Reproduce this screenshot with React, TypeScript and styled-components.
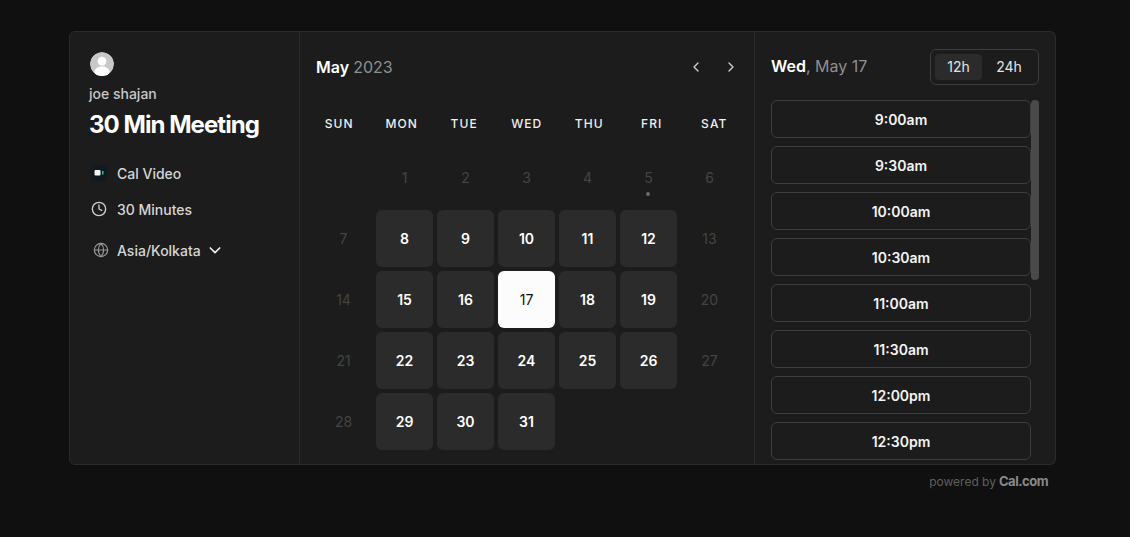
import React from "react";
import styled, { createGlobalStyle } from "styled-components";

const Global = createGlobalStyle`
  html, body { margin: 0; padding: 0; background: #101010; height: 100%; overflow: hidden; }
  body { font-family: Inter, "Noto Sans", sans-serif; color: #fff; }
  * { box-sizing: border-box; }
`;
const Page = styled.div`
  width: 1130px; height: 537px; padding: 31px 0 0 69px; background: #101010;
`;
const Card = styled.main`
  width: 987px; height: 434px; display: flex; background: #1c1c1c;
  border: 1px solid #2b2b2b; border-radius: 6px; overflow: hidden;
`;
const Sidebar = styled.aside`
  width: 230px; flex: none; border-right: 1px solid #2b2b2b; padding: 20px 0 0 19px;
`;
const Avatar = styled.div`
  width: 24px; height: 24px; border-radius: 50%; overflow: hidden; margin-left: 1px;
  svg { display: block; }
`;
const Host = styled.div`
  margin-top: 8px; height: 20px; font-size: 14px; line-height: 20px; font-weight: 500; color: #c8c8c8;
`;
const Title = styled.h1`
  margin: 6px 0 0; font-size: 24px; line-height: 30px; font-weight: 700; letter-spacing: -0.95px; color: #fff;
`;
const Meta = styled.div<{ $top: number }>`
  display: flex; align-items: center; height: 20px; margin-top: ${p => p.$top}px;
  font-size: 14px; font-weight: 500; color: #d6d6d6;
`;
const MetaIcon = styled.span`
  width: 28px; flex: none; display: flex; align-items: center; padding-left: 2px;
`;
const Center = styled.section`
  width: 455px; flex: none; border-right: 1px solid #2b2b2b; padding: 0 0 0 15px;
`;
const MonthBar = styled.div`
  height: 70px; display: flex; align-items: center; justify-content: space-between; padding: 0 15px 0 1px;
`;
const Month = styled.div`
  font-size: 16px; font-weight: 600; color: #fff;
  span { font-weight: 400; color: #8f8f8f; }
`;
const Arrows = styled.div`
  display: flex; gap: 19px; color: #d0d0d0;
`;
const Arrow = styled.button`
  width: 16px; height: 16px; padding: 0; border: 0; background: none; color: inherit; display: flex;
`;
const Weekdays = styled.div`
  display: grid; grid-template-columns: repeat(7, 62.5px); margin-left: -7px; height: 47px; padding-top: 6px;
`;
const Weekday = styled.div`
  text-align: center; font-size: 12px; line-height: 32px; height: 32px; font-weight: 500; letter-spacing: 1.1px; color: #f0f0f0;
`;
const Days = styled.div`
  display: grid; grid-template-columns: repeat(7, 57px); grid-auto-rows: 57px; gap: 4px; margin-top: 0;
`;
const Day = styled.div<{ $kind: "empty" | "off" | "on" | "sel" }>`
  position: relative; display: flex; align-items: center; justify-content: center; border-radius: 6px;
  font-size: 14px;
  font-weight: ${p => (p.$kind === "on" ? 600 : 400)};
  color: ${p => (p.$kind === "on" ? "#fff" : p.$kind === "sel" ? "#111" : "#444")};
  background: ${p => (p.$kind === "on" ? "#2b2b2b" : p.$kind === "sel" ? "#fcfcfc" : "transparent")};
`;
const Dot = styled.i`
  position: absolute; left: 26px; top: 43px; width: 4px; height: 4px; border-radius: 50%; background: #6b6b6b;
`;
const Right = styled.section`
  flex: 1; min-width: 0; padding: 0 16px 0 16px;
`;
const RightHead = styled.div`
  height: 68px; display: flex; align-items: center; justify-content: space-between;
`;
const DateLabel = styled.div`
  font-size: 16px; font-weight: 600; color: #fff;
  span { font-weight: 400; color: #8f8f8f; }
`;
const Toggle = styled.div`
  width: 109px; height: 36px; margin-top: 1px; border: 1px solid #3e3e3e; border-radius: 6px; padding: 4px; display: flex;
`;
const ToggleOption = styled.div<{ $active?: boolean }>`
  flex: none; width: ${p => (p.$active ? "47px" : "54px")}; display: flex; align-items: center; justify-content: center;
  border-radius: 4px; font-size: 14px; color: #e4e4e4; background: ${p => (p.$active ? "#2b2b2b" : "transparent")};
`;
const SlotArea = styled.div`
  position: relative; height: 365px; margin-right: 0; overflow: hidden;
`;
const Slots = styled.div`
  display: flex; flex-direction: column; gap: 8px; width: 260px;
`;
const Slot = styled.button`
  flex: none; width: 260px; height: 38px; background: transparent; border: 1px solid #3e3e3e; border-radius: 6px;
  font: 600 14px Inter, sans-serif; color: #f4f4f4; padding: 0;
`;
const Thumb = styled.div`
  position: absolute; left: 260px; top: 0; width: 8px; height: 180px; border-radius: 4px; background: #4a4a4a;
`;
const Powered = styled.div`
  width: 979px; height: 32px; display: flex; justify-content: flex-end; align-items: center; gap: 3px;
  font-size: 12px; color: #5f5f5f; padding-bottom: 0;
  b { font-size: 13px; font-weight: 700; letter-spacing: -0.5px; color: #8a8a8a; }
`;

const weeks = ["SUN", "MON", "TUE", "WED", "THU", "FRI", "SAT"];
const times = ["9:00am", "9:30am", "10:00am", "10:30am", "11:00am", "11:30am", "12:00pm", "12:30pm", "1:00pm"];
const enabled = new Set([8, 9, 10, 11, 12, 15, 16, 18, 19, 22, 23, 24, 25, 26, 29, 30, 31]);

export default function App() {
  return (
    <Page>
      <Global />
      <Card>
        <Sidebar>
          <Avatar>
            <svg width="24" height="24" viewBox="0 0 24 24">
              <circle cx="12" cy="12" r="12" fill="#c8c8c8" />
              <circle cx="12" cy="9.2" r="4.4" fill="#fff" />
              <ellipse cx="12" cy="20" rx="7.6" ry="5.8" fill="#fff" />
            </svg>
          </Avatar>
          <Host>joe shajan</Host>
          <Title>30 Min Meeting</Title>
          <Meta $top={23}>
            <MetaIcon>
              <svg width="16" height="16" viewBox="0 0 16 16">
                <rect width="16" height="16" rx="2" fill="#111a20" />
                <rect x="3.5" y="5" width="6" height="5.5" rx="1" fill="#f5f5f5" />
                <rect x="11" y="6" width="1.5" height="3.5" fill="#2fc48d" />
              </svg>
            </MetaIcon>
            Cal Video
          </Meta>
          <Meta $top={16}>
            <MetaIcon>
              <svg width="16" height="16" viewBox="0 0 24 24" fill="none" stroke="#d0d0d0" strokeWidth="2" strokeLinecap="round" strokeLinejoin="round">
                <circle cx="12" cy="12" r="10" />
                <path d="M12 6v6l4 2" />
              </svg>
            </MetaIcon>
            30 Minutes
          </Meta>
          <Meta $top={21}>
            <MetaIcon>
              <svg width="16" height="16" viewBox="0 0 24 24" fill="none" stroke="#9a9a9a" strokeWidth="1.7" strokeLinecap="round" strokeLinejoin="round" style={{ marginLeft: 2 }}>
                <circle cx="12" cy="12" r="10" />
                <path d="M2 12h20M12 2a15.3 15.3 0 0 1 4 10 15.3 15.3 0 0 1-4 10 15.3 15.3 0 0 1-4-10 15.3 15.3 0 0 1 4-10z" />
              </svg>
            </MetaIcon>
            Asia/Kolkata
            <svg width="16" height="16" viewBox="0 0 24 24" fill="none" stroke="#e8e8e8" strokeWidth="2.6" strokeLinecap="round" strokeLinejoin="round" style={{ marginLeft: 6 }}>
              <path d="m5 9 7 7 7-7" />
            </svg>
          </Meta>
        </Sidebar>
        <Center>
          <MonthBar>
            <Month>May <span>2023</span></Month>
            <Arrows>
              <Arrow aria-label="Previous">
                <svg width="16" height="16" viewBox="0 0 24 24" fill="none" stroke="currentColor" strokeWidth="2" strokeLinecap="round" strokeLinejoin="round"><path d="m15 18-6-6 6-6" /></svg>
              </Arrow>
              <Arrow aria-label="Next">
                <svg width="16" height="16" viewBox="0 0 24 24" fill="none" stroke="currentColor" strokeWidth="2" strokeLinecap="round" strokeLinejoin="round"><path d="m9 18 6-6-6-6" /></svg>
              </Arrow>
            </Arrows>
          </MonthBar>
          <Weekdays>
            {weeks.map(w => <Weekday key={w}>{w}</Weekday>)}
          </Weekdays>
          <Days>
            <Day $kind="empty" />
            {Array.from({ length: 31 }, (_, i) => i + 1).map(d => (
              <Day key={d} $kind={d === 17 ? "sel" : enabled.has(d) ? "on" : "off"}>
                {d}
                {d === 5 && <Dot />}
              </Day>
            ))}
          </Days>
        </Center>
        <Right>
          <RightHead>
            <DateLabel>Wed<span>, May 17</span></DateLabel>
            <Toggle>
              <ToggleOption $active>12h</ToggleOption>
              <ToggleOption>24h</ToggleOption>
            </Toggle>
          </RightHead>
          <SlotArea>
            <Slots>
              {times.map(t => <Slot key={t}>{t}</Slot>)}
            </Slots>
            <Thumb />
          </SlotArea>
        </Right>
      </Card>
      <Powered>powered by <b>Cal.com</b></Powered>
    </Page>
  );
}
